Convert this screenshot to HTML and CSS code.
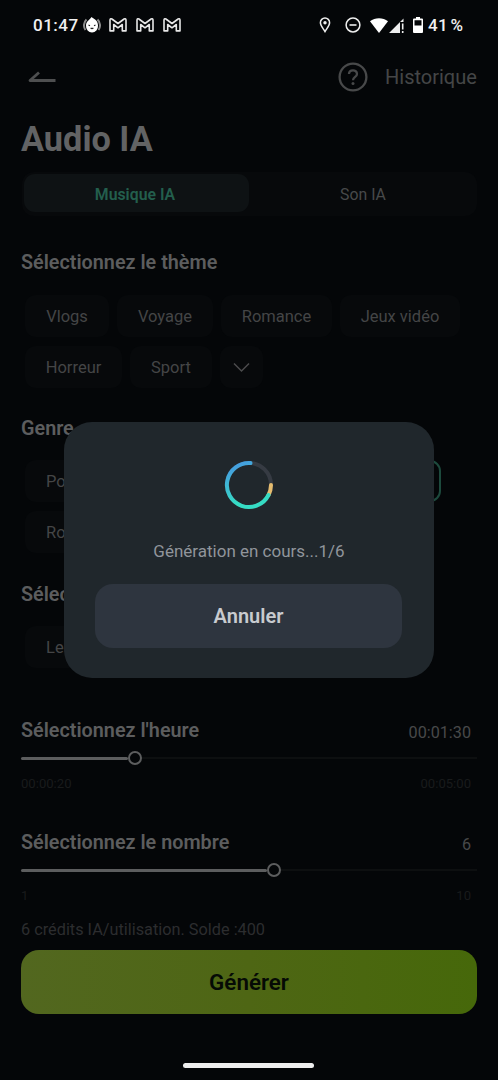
FILE: index.html
```
<!DOCTYPE html>
<html lang="fr">
<head>
<meta charset="utf-8">
<title>Audio IA</title>
<link rel="stylesheet" href="styles.css">
</head>
<body>
<div class="screen">
  <header class="status">
    <span class="clock">01:47</span>
    <svg class="face" width="18" height="18" viewBox="0 0 18 18"><path d="M2.500 14A8 8 0 0 1 3.500 3.500M14.500 3.500a8 8 0 0 1 1 10.500" fill="none" stroke="#8c8c8c" stroke-width="2"/><path d="M8.500 1c1 1.500 6.500 2.500 6.500 8.500A6 6.500 0 0 1 9 16.500a6 6.500 0 0 1-6-7C3 5.500 6 4.500 8.500 1Z" fill="#fff"/><path d="M5.500 9 7 9.700M12.500 9 11 9.700M7.600 12q1.400 1.200 2.800 0" stroke="#222" stroke-width="1.100" fill="none"/></svg>
    <svg class="mail" width="18" height="14" viewBox="0 0 18 14"><path id="m" d="M1 12.900V2.400Q1 .2 2.900 1L9 5.500 15.100 1Q17 .2 17 2.400V12.900H13.300V6.500L9 9.800 4.700 6.500V12.900Z" fill="none" stroke="#e8e8e8" stroke-width="1.600" stroke-linejoin="round"/></svg>
    <svg class="mail" width="18" height="14" viewBox="0 0 18 14"><use href="#m"/></svg>
    <svg class="mail" width="18" height="14" viewBox="0 0 18 14"><use href="#m"/></svg>
    <svg class="pin" width="12" height="16" viewBox="0 0 12 16"><path d="M6 1a4.600 4.600 0 0 1 4.600 4.700C10.600 8.700 8 11.200 6 14.500 4 11.200 1.400 8.700 1.400 5.700A4.600 4.600 0 0 1 6 1Z" fill="none" stroke="#eee" stroke-width="1.500"/><circle cx="6" cy="5.700" r="1.700" fill="#eee"/></svg>
    <svg class="dnd" width="16" height="16" viewBox="0 0 16 16"><circle cx="8" cy="8" r="6.900" fill="none" stroke="#eee" stroke-width="1.500"/><path d="M4.500 8h7" stroke="#eee" stroke-width="1.600"/></svg>
    <svg class="wifi" width="18" height="15" viewBox="0 0 18 15"><path d="M0 3.200C5-.8 13-.8 18 3.200L9 15Z" fill="#fff"/></svg>
    <svg class="signal" width="17" height="15" viewBox="0 0 17 15"><path d="M0 15 14.500.5V4H11v11Z" fill="#eee"/><path d="M13.700 5.500v6M13.700 13v2" stroke="#eee" stroke-width="1.600"/></svg>
    <svg class="battery" width="10" height="16" viewBox="0 0 10 16"><path fill-rule="evenodd" d="M3 0h4v1.500h2Q10 1.500 10 2.500V15q0 1-1 1H1q-1 0-1-1V2.500Q0 1.500 1 1.500h2ZM1.500 3.300v5.200h7V3.300Z" fill="#fff"/></svg>
    <span class="level">41 %</span>
  </header>
  <nav class="nav">
    <svg width="30" height="16" viewBox="0 0 30 16"><path d="M28.500 11.500H3L12 3.500" fill="none" stroke="#4e4f50" stroke-width="2.800" stroke-linejoin="round"/></svg>
    <svg class="help" width="30" height="30" viewBox="0 0 30 30"><circle cx="15" cy="15" r="13.400" fill="none" stroke="#48494a" stroke-width="2.300"/><path d="M11 12.100C11 7.100 19 7.100 19 12c0 2.800-4 3-4 6.200" fill="none" stroke="#48494a" stroke-width="2.300"/><circle cx="15" cy="21.400" r="1.500" fill="#48494a"/></svg>
    <span class="history">Historique</span>
  </nav>
  <h1>Audio IA</h1>
  <div class="tabs"><span class="tab active">Musique IA</span><span class="tab">Son IA</span></div>
  <h2 class="theme-title"><span>Sélectionnez le thème</span></h2>
  <div class="chips themes">
    <span class="chip c84">Vlogs</span><span class="chip c96">Voyage</span><span class="chip c111">Romance</span><span class="chip c120">Jeux vidéo</span>
    <span class="chip c97">Horreur</span><span class="chip c82">Sport</span><span class="chip c43"><svg width="17" height="11" viewBox="0 0 17 11"><path d="M1 1.500 8.500 9 16 1.500" fill="none" stroke="#4b4c4d" stroke-width="1.500"/></svg></span>
  </div>
  <h2><span>Genre</span></h2>
  <div class="chips genres"><span class="chip start c84">Pop</span><span class="chip wide selected"></span><span class="chip start c84">Rock</span></div>
  <h2><span>Sélectionnez</span></h2>
  <div class="chips"><span class="chip start c84">Les</span></div>
  <section class="setting duration">
    <div class="row"><h2><span>Sélectionnez l'heure</span></h2><span class="value">00:01:30</span></div>
    <div class="track"><i class="fill"></i><i class="knob"></i></div>
    <div class="limits"><span>00:00:20</span><span>00:05:00</span></div>
  </section>
  <section class="setting count">
    <div class="row"><h2><span>Sélectionnez le nombre</span></h2><span class="value">6</span></div>
    <div class="track"><i class="fill"></i><i class="knob"></i></div>
    <div class="limits"><span>1</span><span>10</span></div>
  </section>
  <p class="credits"><span>6 crédits IA/utilisation. Solde :400</span></p>
  <button class="generate">Générer</button>
  <div class="home"></div>
  <div class="dialog">
    <svg width="50" height="50" viewBox="0 0 50 50" fill="none" stroke-width="4">
      <defs><linearGradient id="g" x1="0" y1="0" x2=".45" y2="1"><stop offset=".1" stop-color="#459ce0"/><stop offset=".85" stop-color="#35dcc4"/></linearGradient></defs>
      <circle cx="25" cy="25" r="22" stroke="#363b43"/>
      <path d="M47 25A22 22 0 0 1 44.500 35" stroke="#e5bc6f" stroke-linecap="round"/>
      <path d="M26.500 3.100A22 22 0 1 0 44.500 35" stroke="url(#g)" stroke-linecap="round"/>
    </svg>
    <p>Génération en cours...1/6</p>
    <button class="cancel">Annuler</button>
  </div>
</div>
</body>
</html>
```
FILE: styles.css
```
* { box-sizing: border-box; }
body { margin: 0; background: #040608; font-family: Roboto, sans-serif; color: #505152; }
h1, h2, p { margin: 0; }
button { border: 0; font-family: inherit; padding: 0; }
svg { display: block; flex: none; }
.screen { position: relative; width: 498px; height: 1080px; overflow: hidden; padding: 0 21px; display: flex; flex-direction: column; }

.status { height: 50px; display: flex; align-items: center; padding-left: 12px; flex: none; color: #f0f0f0; font-size: 17px; font-weight: 500; }
.clock { width: 49.5px; letter-spacing: .5px; }
.mail { margin-left: 8.7px; }
.pin { margin-left: 138.4px; }
.dnd { margin-left: 14px; }
.wifi { margin-left: 9px; }
.signal { margin-left: 1px; }
.battery { margin-left: 7px; }
.level { margin-left: 5px; white-space: nowrap; letter-spacing: .3px; word-spacing: -2px; }

.nav { height: 54px; flex: none; display: flex; align-items: center; padding-left: 6px; }
.help { margin-left: 281px; }
.history { margin-left: 17px; font-size: 20px; color: #454647; white-space: nowrap; }

h1 { height: 68px; line-height: 70px; font-size: 34.3px; font-weight: 700; color: #626364; flex: none; }
.tabs { height: 44px; flex: none; padding: 2px 0 4px 2px; display: flex; border-radius: 12px; background: #07090b; margin-left: 1px; }
.tab { flex: 1; display: flex; align-items: center; justify-content: center; border-radius: 11px; font-size: 15.8px; padding-top: 2px; color: #48494a; }
.tab.active { flex: 0 0 225px; padding-right: 3px; background: #0e1214; color: #235f4d; font-weight: 600; }

h2 { height: 40px; line-height: 42px; flex: none; font-size: 19.8px; font-weight: 600; color: #5c5d5e; white-space: nowrap; }
.theme-title { margin-top: 26px; }
.chips { display: flex; flex-wrap: wrap; gap: 9px 8px; padding: 12px 0 20px 4px; flex: none; }
.themes { padding-top: 13px; }
.genres { padding-bottom: 21px; }
.chip { height: 42px; border-radius: 11px; background: #07090b; display: flex; align-items: center; justify-content: center; font-size: 16.5px; color: #444546; white-space: nowrap; }
.start { justify-content: flex-start; padding-left: 21px; }
.c84 { width: 84px; }
.c96 { width: 96px; }
.c111 { width: 111px; }
.c120 { width: 120px; }
.c97 { width: 97px; }
.c82 { width: 82px; }
.c43 { width: 43px; }
.wide { width: 324px; }
.selected { border: 2px solid #1d4a3d; background: #040608; }

.setting { flex: none; height: 112px; }
.duration { margin-top: 22px; }
.row { display: flex; justify-content: space-between; height: 40px; padding-right: 6px; }
.value { line-height: 45px; font-size: 16.2px; color: #48494a; }
.track { height: 16px; display: flex; align-items: center; background: linear-gradient(#0d0f10, #0d0f10) 0 50% / 100% 2px no-repeat; }
.fill { height: 3px; background: #5c5d5e; border-radius: 2px; }
.duration .fill { width: 107px; }
.count .fill { width: 246px; }
.knob { width: 14px; height: 14px; border: 2px solid #5c5d5e; border-radius: 50%; background: #040608; }
.limits { display: flex; justify-content: space-between; padding: 8px 6px 0 0; font-size: 13.1px; line-height: 20px; color: #191b1c; }
.credits { height: 32px; line-height: 34px; margin-top: -21px; font-size: 16.3px; color: #2c2d2f; flex: none; }
.generate { margin: 5px 0 0; width: 456px; height: 64px; flex: none; border-radius: 18px; background: linear-gradient(90deg, #52671f, #4e6614 50%, #46680a); color: #050a05; font-size: 22.4px; font-weight: 600; }
.home { flex: none; width: 131px; height: 5px; border-radius: 3px; background: #eee; margin: 49px 0 0 162px; }

.dialog { position: absolute; left: 64px; top: 422px; width: 370px; height: 256px; border-radius: 28px; background: #20272c; display: flex; flex-direction: column; align-items: center; padding-top: 38px; }
.dialog p { margin-top: 27px; line-height: 28px; font-size: 17px; color: #90959b; white-space: nowrap; }
.cancel { width: 307px; height: 64px; margin: 18.5px 1px 0 0; border-radius: 18px; background: #2e353f; color: #c8cbcf; font-size: 20px; font-weight: 600; flex: none; }
```
